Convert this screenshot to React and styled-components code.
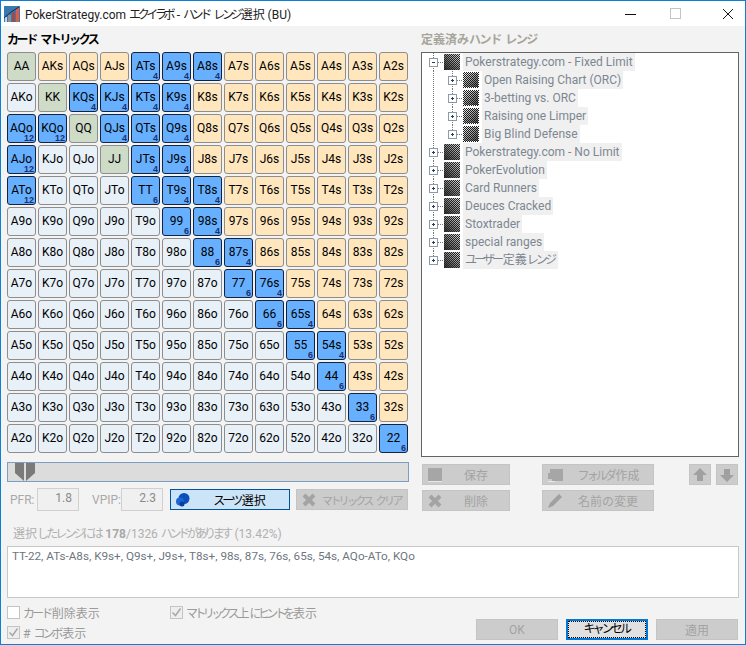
import React from "react";
import styled, { createGlobalStyle } from "styled-components";

const GlobalStyle = createGlobalStyle`
  html, body {
    margin: 0;
    padding: 0;
    background: #f3f3f3;
  }
  * {
    box-sizing: border-box;
  }
`;

const uiFont = `Roboto, "Noto Sans CJK JP", sans-serif`;

const Window = styled.div`
  width: 746px;
  height: 645px;
  border: 1px solid #0c7fd6;
  background: #f3f3f3;
  display: flex;
  flex-direction: column;
  font-family: ${uiFont};
  font-size: 12px;
  color: #000;
  overflow: hidden;
`;

const TitleBar = styled.div`
  height: 25px;
  flex: none;
  background: #fff;
  display: flex;
  align-items: center;
  padding-left: 3px;
`;

const TitleText = styled.div`
  margin-left: 5px;
  font-size: 12px;
  color: #222;
  white-space: pre;
`;

const WindowButtons = styled.div`
  margin-left: auto;
  display: flex;
  align-items: center;
  margin-right: 6px;
  gap: 30px;
  color: #111;
`;

// kana in the original UI font are much narrower than in Noto CJK
const Kana = styled.span`
  letter-spacing: ${(p) => p.$s || -0.24}em;
  padding-right: 0.12em;
`;

const Glyph = styled.svg`
  flex: none;
  display: block;
  margin-left: ${(p) => p.$left || 0}px;
  margin-right: ${(p) => p.$right || 0}px;
`;

const Body = styled.div`
  flex: 1;
  padding: 0 6px;
  display: flex;
  flex-direction: column;
`;

const Columns = styled.div`
  display: flex;
  gap: 12px;
`;

const Column = styled.div`
  width: ${(p) => p.$width}px;
  flex: none;
`;

const Heading = styled.div`
  height: 26px;
  padding-top: 6px;
  line-height: 16px;
  font-weight: 700;
  font-size: 12px;
  white-space: pre;
  color: ${(p) => (p.$muted ? "#a8a59c" : "#000")};
`;

const Matrix = styled.div`
  display: grid;
  grid-template-columns: repeat(13, 29px);
  grid-auto-rows: 29px;
  gap: 2px;
`;

const cellColors = {
  pair: "#cddbc7",
  suited: "#ffe6bc",
  off: "#e8f0f8",
  picked: "#66b0ff",
};

const Cell = styled.div`
  position: relative;
  border: 1px solid ${(p) => (p.$kind === "picked" ? "#14233c" : "#8d8d8d")};
  border-radius: 3px;
  background: ${(p) => cellColors[p.$kind]};
  display: flex;
  align-items: center;
  justify-content: center;
  font-size: 12px;
  line-height: 12px;
  padding-bottom: 1px;
  color: #000;
`;

const Combo = styled.span`
  position: absolute;
  right: 1px;
  bottom: 0;
  font-family: "Liberation Sans", sans-serif;
  font-size: 9px;
  line-height: 7px;
  font-weight: 700;
  color: #1c2f6e;
`;

const Slider = styled.div`
  margin-top: 9px;
  height: 20px;
  background: #dcdcdc;
  border: 1px solid #7c9fbf;
  padding-left: 7px;
  display: flex;
`;

const Controls = styled.div`
  margin-top: 6px;
  display: flex;
  align-items: center;
  height: 23px;
`;

const StatLabel = styled.span`
  width: ${(p) => p.$width}px;
  padding-left: ${(p) => p.$pad}px;
  color: #a9a9a9;
  font-size: 12px;
`;

const StatBox = styled.div`
  width: 42px;
  height: 23px;
  margin-right: ${(p) => p.$gap}px;
  border: 1px solid #d0d0d0;
  background: #f0f0f0;
  color: #8a8a8a;
  text-align: right;
  padding-right: 6px;
  line-height: 19px;
`;

const SuitButton = styled.div`
  width: 120px;
  height: 21px;
  background: #cce4f7;
  border: 1px solid #005499;
  display: flex;
  align-items: center;
  padding-left: 4px;
  font-size: 12px;
`;

const ButtonLabel = styled.span`
  flex: 1;
  text-align: center;
  white-space: pre;
`;

const GreyButton = styled.div`
  width: ${(p) => p.$width}px;
  height: 21px;
  margin-left: ${(p) => p.$left || 0}px;
  background: #cccccc;
  color: #a3a3a3;
  display: flex;
  align-items: center;
  justify-content: center;
  padding-left: ${(p) => (p.$plain ? 0 : 4)}px;
  font-size: ${(p) => p.$size || 12}px;
  flex: none;
  border: 1px solid #c4c4c4;
`;

const Tree = styled.div`
  height: 405px;
  background: #fff;
  border: 1px solid #646464;
`;

const TreeRow = styled.div`
  height: 18px;
  display: flex;
  align-items: center;
`;

const TreeLabel = styled.span`
  height: 18px;
  line-height: 19px;
  padding: 0 2px;
  background: #f0f0f0;
  color: #7d8791;
  font-size: 12px;
  white-space: nowrap;
`;

const TreeActions = styled.div`
  margin-top: 7px;
  display: flex;
  flex-direction: column;
  gap: 5px;
`;

const ActionRow = styled.div`
  display: flex;
  padding-left: 1px;
`;

const Summary = styled.div`
  margin-top: 15px;
  height: 20px;
  padding-left: 6px;
  line-height: 17px;
  color: #b0b0b0;
  font-size: 12px;
  white-space: nowrap;
  b {
    color: #a8a8a8;
  }
`;

const RangeText = styled.div`
  height: 52px;
  width: 732px;
  background: #fff;
  border: 1px solid #c8c8c8;
  padding: 1px 4px;
  line-height: 17px;
  color: #6e7680;
  font-size: 11.7px;
`;

const Footer = styled.div`
  margin-top: 7px;
  display: flex;
  justify-content: space-between;
`;

const Checks = styled.div`
  display: grid;
  grid-template-columns: 163px auto;
  grid-auto-rows: 20px;
`;

const Check = styled.label`
  display: flex;
  align-items: center;
  gap: 3px;
  height: 15px;
  color: #9a9a9a;
  font-size: 12px;
  white-space: nowrap;
`;

const Box = styled.span`
  width: 13px;
  height: 13px;
  border: 1px solid #c4c4c4;
  background: ${(p) => (p.$on ? "#eeeeee" : "#fff")};
  flex: none;
  display: flex;
`;

const DialogButtons = styled.div`
  display: flex;
  align-self: flex-start;
  gap: 8px;
  margin-right: 1px;
  margin-top: 14px;
`;

const FocusButton = styled.div`
  width: 82px;
  height: 21px;
  background: #e1e1e1;
  border: 2px solid #0078d7;
  outline: 1px dotted #000;
  outline-offset: -3px;
  text-align: center;
  line-height: 16px;
  font-size: 12px;
`;

const ranks = "AKQJT98765432".split("");
const picked = new Set(
  "TT 99 88 77 66 55 44 33 22 ATs A9s A8s KQs KJs KTs K9s QJs QTs Q9s JTs J9s T9s T8s 98s 87s 76s 65s 54s AQo AJo ATo KQo".split(" ")
);

function handName(row, col) {
  if (row === col) return ranks[row] + ranks[col];
  if (row < col) return ranks[row] + ranks[col] + "s";
  return ranks[col] + ranks[row] + "o";
}

function HandCell({ row, col }) {
  const name = handName(row, col);
  const isPicked = picked.has(name);
  const base = row === col ? "pair" : row < col ? "suited" : "off";
  const combos = row === col ? 6 : row < col ? 4 : 12;
  return (
    <Cell $kind={isPicked ? "picked" : base}>
      {name}
      {isPicked && <Combo>{combos}</Combo>}
    </Cell>
  );
}

function AppIcon() {
  return (
    <Glyph width="16" height="16" viewBox="0 0 16 16">
      <rect width="16" height="16" fill="#3a78b0" />
      <rect x="1" y="11" width="2" height="5" fill="#c9d4de" />
      <rect x="4" y="9" width="3" height="7" fill="#8a8f98" />
      <rect x="8" y="6" width="3" height="10" fill="#a34a48" />
      <rect x="12" y="2" width="3" height="14" fill="#d8604a" />
      <path d="M0 12 L7 6 L15 1" stroke="#1b2c44" strokeWidth="1" fill="none" />
    </Glyph>
  );
}

function Dither({ child }) {
  const dots = [];
  for (let y = 0; y < 16; y++) {
    for (let x = 0; x < 16; x++) {
      const shade = child ? (x + y) / 30 : (x - y + 16) / 32;
      if ((x + y) % 2 === 0) {
        const edge = child && (x === 0 || y === 0 || x === 15 || y === 15);
        const lit = child ? 255 - shade * 190 : 40 + shade * 190;
        const v = Math.round(edge ? 255 : lit);
        dots.push(<rect key={`${x}-${y}`} x={x} y={y} width="1" height="1" fill={`rgb(${v},${v},${v})`} />);
      }
    }
  }
  return (
    <Glyph width="16" height="16" viewBox="0 0 16 16" shapeRendering="crispEdges" $right={3}>
      <rect width="16" height="16" fill={child ? "#1a1a1a" : "#222"} />
      {dots}
    </Glyph>
  );
}

function Expander({ x, open, up, down, hook }) {
  return (
    <>
      {up && <line x1={x + 0.5} y1="0" x2={x + 0.5} y2="5" stroke="#777" strokeDasharray="1 1" />}
      {down && <line x1={x + 0.5} y1="13" x2={x + 0.5} y2="18" stroke="#777" strokeDasharray="1 1" />}
      <line x1={x + 5} y1="9.5" x2={hook} y2="9.5" stroke="#777" strokeDasharray="1 1" />
      <rect x={x - 3.5} y="5.5" width="8" height="8" rx="1" fill="#fff" stroke="#8f9aa8" />
      <line x1={x - 1} y1="9.5" x2={x + 2} y2="9.5" stroke="#333a55" />
      {!open && <line x1={x + 0.5} y1="8" x2={x + 0.5} y2="11" stroke="#333a55" />}
    </>
  );
}

function RootNode({ children, open, last }) {
  return (
    <TreeRow>
      <Glyph width="22" height="18" shapeRendering="crispEdges">
        <Expander x={11} open={open} up down={!last} hook={22} />
      </Glyph>
      <Dither />
      <TreeLabel>{children}</TreeLabel>
    </TreeRow>
  );
}

function ChildNode({ children, last }) {
  return (
    <TreeRow>
      <Glyph width="41" height="18" shapeRendering="crispEdges">
        <line x1="11.5" y1="0" x2="11.5" y2="18" stroke="#777" strokeDasharray="1 1" />
        <Expander x={30} up={false} down={false} hook={41} />
        <line x1="30.5" y1="0" x2="30.5" y2="5" stroke="#777" strokeDasharray="1 1" />
        {!last && <line x1="30.5" y1="13" x2="30.5" y2="18" stroke="#777" strokeDasharray="1 1" />}
      </Glyph>
      <Dither child />
      <TreeLabel>{children}</TreeLabel>
    </TreeRow>
  );
}

function CrossIcon() {
  return (
    <Glyph width="16" height="16" viewBox="0 0 16 16">
      <path d="M3 3 L13 13 M13 3 L3 13" stroke="#a4a4a4" strokeWidth="4" />
    </Glyph>
  );
}

function SaveIcon() {
  return (
    <Glyph width="16" height="16" viewBox="0 0 16 16">
      <rect x="1" y="1" width="14" height="14" fill="#a6a6a6" />
      <rect x="1" y="14" width="14" height="1" fill="#e8e8e8" />
    </Glyph>
  );
}

function FolderIcon() {
  return (
    <Glyph width="17" height="16" viewBox="0 0 17 16">
      <path d="M3 2 H16 V14 H5 V12 H1 V6 H3 Z" fill="#a6a6a6" />
      <rect x="1" y="14" width="7" height="1" fill="#e8e8e8" />
    </Glyph>
  );
}

function PencilIcon() {
  return (
    <Glyph width="16" height="16" viewBox="0 0 16 16">
      <path d="M1 15 L3 10 L12 1 L15 4 L6 13 Z" fill="#a0a0a0" />
    </Glyph>
  );
}

function ArrowIcon({ down }) {
  return (
    <Glyph width="14" height="14" viewBox="0 0 14 14">
      <path d={down ? "M4 1 H10 V7 H14 L7 14 L0 7 H4 Z" : "M7 0 L14 7 H10 V13 H4 V7 H0 Z"} fill="#a0a0a0" />
    </Glyph>
  );
}

function SuitIcon() {
  return (
    <Glyph width="15" height="15" viewBox="0 0 15 15">
      <circle cx="9" cy="6.5" r="5.5" fill="#0b4fb8" />
      <circle cx="5" cy="9.5" r="4" fill="#1a66d6" />
      <circle cx="7" cy="12" r="2.5" fill="#0b3f9c" />
    </Glyph>
  );
}

function Tick() {
  return (
    <Glyph width="11" height="11" viewBox="0 0 11 11">
      <path d="M1.5 5.5 L4.5 8.5 L9.5 1.5" stroke="#a8a8a8" strokeWidth="1.5" fill="none" />
    </Glyph>
  );
}

function SliderThumb() {
  return (
    <Glyph width="20" height="18" viewBox="0 0 20 18">
      <path d="M0 0 H9 V18 L0 10 Z" fill="#7a7a7a" />
      <path d="M11 0 H20 V10 L11 18 Z" fill="#7a7a7a" />
    </Glyph>
  );
}

export default function App() {
  return (
    <>
      <GlobalStyle />
      <Window>
        <TitleBar>
          <AppIcon />
          <TitleText>
            PokerStrategy.com <Kana $s={-0.28}>エクイラボ</Kana> - <Kana $s={-0.28}>ハンド</Kana> <Kana $s={-0.28}>レンジ</Kana>選択 (BU)
          </TitleText>
          <WindowButtons>
            <Glyph width="11" height="11" viewBox="0 0 11 11">
              <line x1="0" y1="6.5" x2="11" y2="6.5" stroke="#111" />
            </Glyph>
            <Glyph width="11" height="11" viewBox="0 0 11 11" $left={4}>
              <rect x="0.5" y="0.5" width="10" height="10" fill="none" stroke="#c4c4c4" />
            </Glyph>
            <Glyph width="12" height="12" viewBox="0 0 12 12" $left={11} $right={5}>
              <path d="M1 1 L11 11 M11 1 L1 11" stroke="#111" strokeWidth="1" />
            </Glyph>
          </WindowButtons>
        </TitleBar>
        <Body>
          <Columns>
            <Column $width={402}>
              <Heading>
                <Kana $s={-0.2}>カード</Kana> <Kana $s={-0.2}>マトリックス</Kana>
              </Heading>
              <Matrix>
                {ranks.map((_, row) =>
                  ranks.map((_, col) => <HandCell key={`${row}-${col}`} row={row} col={col} />)
                )}
              </Matrix>
              <Slider>
                <SliderThumb />
              </Slider>
              <Controls>
                <StatLabel $width={30} $pad={3}>PFR:</StatLabel>
                <StatBox $gap={13}>1.8</StatBox>
                <StatLabel $width={29} $pad={0}>VPIP:</StatLabel>
                <StatBox $gap={7}>2.3</StatBox>
                <SuitButton>
                  <SuitIcon />
                  <ButtonLabel>
                    <Kana>スーツ</Kana>選択
                  </ButtonLabel>
                </SuitButton>
                <GreyButton $width={112} $left={6} $size={11}>
                  <CrossIcon />
                  <ButtonLabel>
                    <Kana>マトリックス</Kana> <Kana>クリア</Kana>
                  </ButtonLabel>
                </GreyButton>
              </Controls>
            </Column>
            <Column $width={318}>
              <Heading $muted>
                定義済み<Kana $s={-0.12}>ハンド</Kana> <Kana $s={-0.12}>レンジ</Kana>
              </Heading>
              <Tree>
                <RootNode open>Pokerstrategy.com - Fixed Limit</RootNode>
                <ChildNode>Open Raising Chart (ORC)</ChildNode>
                <ChildNode>3-betting vs. ORC</ChildNode>
                <ChildNode>Raising one Limper</ChildNode>
                <ChildNode last>Big Blind Defense</ChildNode>
                <RootNode>Pokerstrategy.com - No Limit</RootNode>
                <RootNode>PokerEvolution</RootNode>
                <RootNode>Card Runners</RootNode>
                <RootNode>Deuces Cracked</RootNode>
                <RootNode>Stoxtrader</RootNode>
                <RootNode>special ranges</RootNode>
                <RootNode last>
                  <Kana>ユーザー</Kana>定義<Kana>レンジ</Kana>
                </RootNode>
              </Tree>
              <TreeActions>
                <ActionRow>
                  <GreyButton $width={88}>
                    <SaveIcon />
                    <ButtonLabel>保存</ButtonLabel>
                  </GreyButton>
                  <GreyButton $width={112} $left={32}>
                    <FolderIcon />
                    <ButtonLabel>
                      <Kana>フォルダ</Kana>作成
                    </ButtonLabel>
                  </GreyButton>
                  <GreyButton $width={22} $left={35} $plain>
                    <ArrowIcon />
                  </GreyButton>
                  <GreyButton $width={22} $left={5} $plain>
                    <ArrowIcon down />
                  </GreyButton>
                </ActionRow>
                <ActionRow>
                  <GreyButton $width={88}>
                    <CrossIcon />
                    <ButtonLabel>削除</ButtonLabel>
                  </GreyButton>
                  <GreyButton $width={112} $left={32}>
                    <PencilIcon />
                    <ButtonLabel>名前の変更</ButtonLabel>
                  </GreyButton>
                </ActionRow>
              </TreeActions>
            </Column>
          </Columns>
          <Summary>
            選択<Kana $s={-0.24}>したレンジには</Kana> <b>178</b>/1326 <Kana $s={-0.28}>ハンドがあります</Kana> (13.42%)
          </Summary>
          <RangeText>TT-22, ATs-A8s, K9s+, Q9s+, J9s+, T8s+, 98s, 87s, 76s, 65s, 54s, AQo-ATo, KQo</RangeText>
          <Footer>
            <Checks>
              <Check>
                <Box />
                <span>
                  <Kana>カード</Kana>削除表示
                </span>
              </Check>
              <Check>
                <Box $on>
                  <Tick />
                </Box>
                <span>
                  <Kana $s={-0.3}>マトリックス</Kana>上<Kana $s={-0.3}>にヒントを</Kana>表示
                </span>
              </Check>
              <Check>
                <Box $on>
                  <Tick />
                </Box>
                <span>
                  # <Kana>コンボ</Kana>表示
                </span>
              </Check>
            </Checks>
            <DialogButtons>
              <GreyButton $width={82} $plain>OK</GreyButton>
              <FocusButton>
                <Kana>キャンセル</Kana>
              </FocusButton>
              <GreyButton $width={82} $plain>適用</GreyButton>
            </DialogButtons>
          </Footer>
        </Body>
      </Window>
    </>
  );
}
